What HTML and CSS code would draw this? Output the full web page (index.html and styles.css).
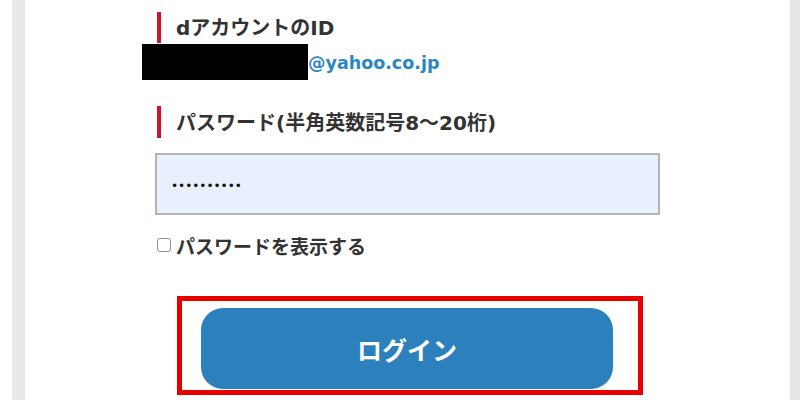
FILE: index.html
```html
<!DOCTYPE html>
<html lang="ja">
  <head>
    <meta charset="UTF-8" />
    <meta name="viewport" content="width=device-width, initial-scale=1.0" />
    <title>ログイン</title>
    <link rel="stylesheet" href="styles.css">
  </head>
  <body>
    <div class="screen">
      <div class="form">
        <div class="field">
          <h2 class="label">dアカウントのID</h2>
          <div class="account">
            <span class="mask"></span>
            <span class="mail">@yahoo.co.jp</span>
          </div>
        </div>

        <div class="field">
          <h2 class="label label-pass">パスワード(半角英数記号8〜20桁)</h2>
          <input class="password" type="password" value="abcdefghij" />
        </div>

        <label class="show-pass">
          <input type="checkbox" />
          <span>パスワードを表示する</span>
        </label>

        <div class="highlight">
          <button class="login">ログイン</button>
        </div>
      </div>
    </div>
  </body>
</html>
```

FILE: styles.css
```css
html,
body {
  margin: 0;
  height: 100%;
  background-color: #fff;
}

body {
  font-family: "DejaVu Sans", "Noto Sans CJK JP", sans-serif;
  color: #333;
  overflow: hidden;
}

.screen {
  height: 400px;
  margin-left: 12px;
  border-left: 13px solid #e9e9e9;
  border-right: 10px solid #e6e6e6;
  background: #fff;
}

.form {
  padding: 12px 0 0 130px;
}

.label {
  margin: 0 0 0 2px;
  height: 31px;
  line-height: 33px;
  padding-left: 15px;
  border-left: 4px solid #d01230;
  font-size: 20px;
  font-weight: bold;
  color: #333;
}

.label-pass {
  margin-top: 26px;
  height: 32px;
  line-height: 35px;
}

.account {
  display: flex;
  align-items: center;
  height: 36px;
  margin-top: 1px;
  margin-left: -13px;
}

.mask {
  width: 166px;
  height: 36px;
  background: #000;
}

.mail {
  color: #2a86c3;
  font-size: 17.5px;
  font-weight: bold;
  padding-top: 2px;
}

.password {
  display: block;
  box-sizing: border-box;
  width: 505px;
  height: 62px;
  margin-top: 15px;
  padding: 4px 0 0 14px;
  border: 2px solid #b5b5b5;
  border-radius: 0;
  background: #e8f0fe;
  font-family: "DejaVu Sans", sans-serif;
  font-size: 12px;
  color: #111;
  outline: none;
}

.show-pass {
  display: flex;
  align-items: center;
  height: 24px;
  margin-top: 18px;
  font-size: 19px;
  font-weight: bold;
  color: #333;
}

.show-pass input {
  appearance: none;
  width: 14px;
  height: 14px;
  margin: 0 5px 0 2px;
  border: 1px solid #8f8f8f;
  border-radius: 3px;
  background: #fff;
}

.highlight {
  width: 466px;
  box-sizing: border-box;
  margin: 39px 0 0 22px;
  padding: 7px 25px 1px 19px;
  border: 5px solid #e60000;
}

.login {
  display: block;
  width: 412px;
  height: 81px;
  border: none;
  border-radius: 22px;
  background-color: #2c80bc;
  color: #fff;
  font-family: "DejaVu Sans", "Noto Sans CJK JP", sans-serif;
  font-size: 25px;
  font-weight: bold;
  cursor: pointer;
}

.login:focus {
  outline: none;
}
```
